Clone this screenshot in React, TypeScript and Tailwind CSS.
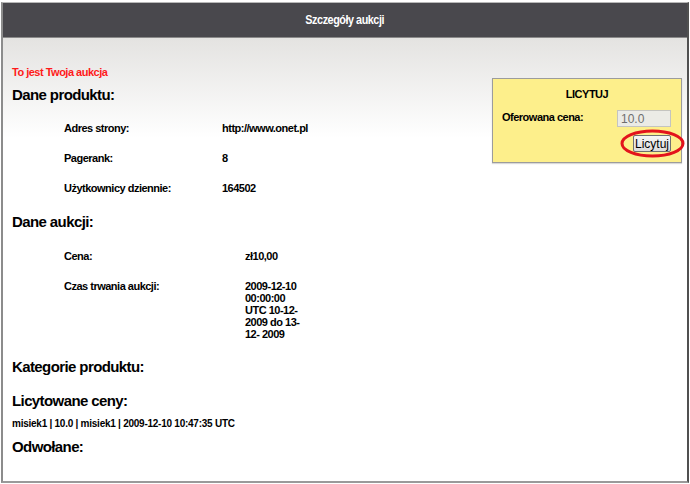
import React from 'react';

const font = { fontFamily: '"Liberation Sans", Arial, sans-serif' };

const productRows = [
  { label: 'Adres strony:', value: 'http://www.onet.pl' },
  { label: 'Pagerank:', value: '8' },
  { label: 'Użytkownicy dziennie:', value: '164502' },
];

const App = () => {
  return (
    <div className="w-[690px] h-[484px] bg-white font-['Liberation_Sans',Arial,sans-serif]">
      <div className="ml-[1px] mt-[2px] w-[688px] h-[481px] border-t border-t-[#b8b8b8] border-l-2 border-l-[#8c8c8c] border-r-2 border-r-[#505050] border-b-2 border-b-[#9a9a9a] flex flex-col">
        {/* Header */}
        <div className="h-[35px] bg-[#49484d] border-b border-b-[#8a8a8a] flex items-center justify-center">
          <span className="text-white text-[12px] font-bold tracking-[-0.5px] inline-block scale-x-[0.9]">Szczegóły aukcji</span>
        </div>

        {/* Content */}
        <div className="flex-1 flex items-start bg-[linear-gradient(to_bottom,#e4e3e1,#ffffff_100px)] text-black">
          <div className="flex-1 pl-[9px] pt-[28px]">
            <div className="text-[11px] leading-[12px] font-bold text-[#ff1a1a] tracking-[-0.5px]">To jest Twoja aukcja</div>

            <h2 className="mt-[8px] text-[15px] leading-[18px] font-bold tracking-[-0.6px]">Dane produktu:</h2>
            <div className="mt-[9px] pl-[52px]">
              {productRows.map((row) => (
                <div key={row.label} className="h-[30px] grid grid-cols-[158px_1fr] items-center text-[11px] font-bold tracking-[-0.5px]">
                  <span>{row.label}</span>
                  <span>{row.value}</span>
                </div>
              ))}
            </div>

            <h2 className="mt-[10px] text-[15px] leading-[18px] font-bold tracking-[-0.6px]">Dane aukcji:</h2>
            <div className="mt-[10px] pl-[52px] text-[11px] font-bold tracking-[-0.5px]">
              <div className="h-[30px] grid grid-cols-[181px_70px] items-center">
                <span>Cena:</span>
                <span>zł10,00</span>
              </div>
              <div className="grid grid-cols-[181px_70px] items-start pt-[9px] pb-[9px] leading-[12px]">
                <span>Czas trwania aukcji:</span>
                <span>
                  2009-12-10<br />00:00:00<br />UTC 10-12-<br />2009 do 13-<br />12- 2009
                </span>
              </div>
            </div>

            <h2 className="mt-[9px] text-[15px] leading-[18px] font-bold tracking-[-0.6px]">Kategorie produktu:</h2>
            <h2 className="mt-[16px] text-[15px] leading-[18px] font-bold tracking-[-0.6px]">Licytowane ceny:</h2>
            <div className="mt-[8px] text-[10px] leading-[12px] font-bold tracking-[-0.25px]">
              misiek1 | 10.0 | misiek1 | 2009-12-10 10:47:35 UTC
            </div>
            <h2 className="mt-[8px] text-[15px] leading-[18px] font-bold tracking-[-0.6px]">Odwołane:</h2>
          </div>

          {/* Bid box */}
          <div className="mt-[40px] mr-[5px] w-[190px] h-[85px] bg-[#fdef8b] border border-[#9c9c9c] shadow-[0_1px_1px_rgba(0,0,0,0.15)] flex flex-col">
            <div className="mt-[9px] text-center text-[11px] leading-[12px] font-bold tracking-[-0.5px]">LICYTUJ</div>
            <div className="mt-[10px] pl-[9px] pr-[10px] flex items-center justify-between">
              <span className="text-[11px] font-bold tracking-[-0.5px] -mt-[3px]">Oferowana cena:</span>
              <input
                disabled
                value="10.0"
                readOnly
                style={font}
                className="w-[54px] h-[17px] bg-[#ebebe6] border border-[#c4c4c0] text-[12px] text-[#6e6e6e] px-[3px] outline-none"
              />
            </div>
            <div className="mt-[8px] pr-[10px] flex justify-end">
              <div className="relative">
                <button
                  style={font}
                  className="w-[38px] h-[17px] p-0 bg-[linear-gradient(to_bottom,#f6f6f6,#dcdcdc)] border border-[#707070] rounded-[2px] text-[12px] leading-[14px] text-black flex items-center justify-center"
                >
                  Licytuj
                </button>
                <svg className="absolute left-[-13px] top-[-6px]" width="65" height="29" viewBox="0 0 65 29">
                  <ellipse cx="32.5" cy="14.5" rx="30.5" ry="12.5" fill="none" stroke="#e3141c" strokeWidth="3" />
                </svg>
              </div>
            </div>
          </div>
        </div>
      </div>
    </div>
  );
};

export default App;
